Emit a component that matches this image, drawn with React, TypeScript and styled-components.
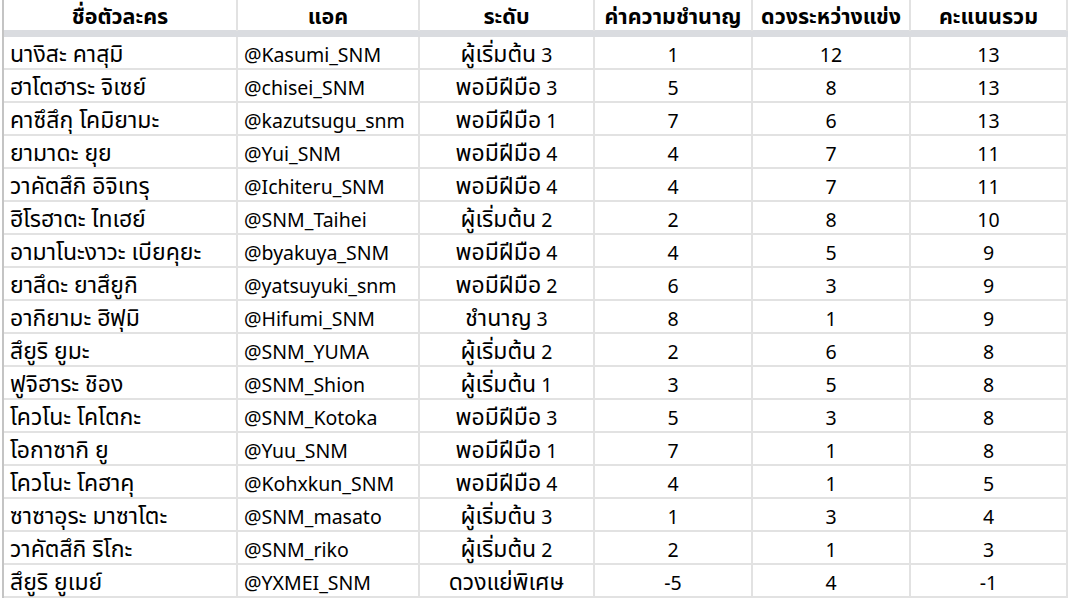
import React from 'react';
import styled, { createGlobalStyle } from 'styled-components';

const GlobalStyle = createGlobalStyle`
  html, body {
    margin: 0;
    padding: 0;
    background: #ffffff;
  }
  body {
    font-family: "Noto Sans", "Noto Sans Thai", "DejaVu Sans", sans-serif;
    color: #000000;
    overflow: hidden;
  }
`;

type Align = 'left' | 'center';

interface Column {
  title: string;
  width: number;
  align: Align;
}

const columns: Column[] = [
  { title: 'ชื่อตัวละคร', width: 234, align: 'left' },
  { title: 'แอค', width: 182, align: 'left' },
  { title: 'ระดับ', width: 175, align: 'center' },
  { title: 'ค่าความชำนาญ', width: 158, align: 'center' },
  { title: 'ดวงระหว่างแข่ง', width: 158, align: 'center' },
  { title: 'คะแนนรวม', width: 157, align: 'center' },
];

const rows: (string | number)[][] = [
  ['นางิสะ คาสุมิ', '@Kasumi_SNM', 'ผู้เริ่มต้น 3', 1, 12, 13],
  ['ฮาโตฮาระ จิเซย์', '@chisei_SNM', 'พอมีฝีมือ 3', 5, 8, 13],
  ['คาซึสึกุ โคมิยามะ', '@kazutsugu_snm', 'พอมีฝีมือ 1', 7, 6, 13],
  ['ยามาดะ ยุย', '@Yui_SNM', 'พอมีฝีมือ 4', 4, 7, 11],
  ['วาคัตสึกิ อิจิเทรุ', '@Ichiteru_SNM', 'พอมีฝีมือ 4', 4, 7, 11],
  ['ฮิโรฮาตะ ไทเฮย์', '@SNM_Taihei', 'ผู้เริ่มต้น 2', 2, 8, 10],
  ['อามาโนะงาวะ เบียคุยะ', '@byakuya_SNM', 'พอมีฝีมือ 4', 4, 5, 9],
  ['ยาสึดะ ยาสึยูกิ', '@yatsuyuki_snm', 'พอมีฝีมือ 2', 6, 3, 9],
  ['อากิยามะ ฮิฟุมิ', '@Hifumi_SNM', 'ชำนาญ 3', 8, 1, 9],
  ['สึยูริ ยูมะ', '@SNM_YUMA', 'ผู้เริ่มต้น 2', 2, 6, 8],
  ['ฟูจิฮาระ ชิอง', '@SNM_Shion', 'ผู้เริ่มต้น 1', 3, 5, 8],
  ['โควโนะ โคโตกะ', '@SNM_Kotoka', 'พอมีฝีมือ 3', 5, 3, 8],
  ['โอกาซากิ ยู', '@Yuu_SNM', 'พอมีฝีมือ 1', 7, 1, 8],
  ['โควโนะ โคฮาคุ', '@Kohxkun_SNM', 'พอมีฝีมือ 4', 4, 1, 5],
  ['ซาซาอุระ มาซาโตะ', '@SNM_masato', 'ผู้เริ่มต้น 3', 1, 3, 4],
  ['วาคัตสึกิ ริโกะ', '@SNM_riko', 'ผู้เริ่มต้น 2', 2, 1, 3],
  ['สึยูริ ยูเมย์', '@YXMEI_SNM', 'ดวงแย่พิเศษ', -5, 4, -1],
];

const gridTemplate = columns.map((c) => `${c.width}px`).join(' ');

const Sheet = styled.div`
  margin-left: 2px;
  border-left: 2px solid #c4c4c4;
  width: ${columns.reduce((s, c) => s + c.width, 0)}px;
`;

const HeaderRow = styled.div`
  display: grid;
  grid-template-columns: ${gridTemplate};
  height: 30px;
  border-bottom: 7px solid #dadce0;
`;

const Row = styled.div`
  display: grid;
  grid-template-columns: ${gridTemplate};
  height: 31px;
  border-bottom: 2px solid #e2e2e2;
`;

const Cell = styled.div<{ $align: Align }>`
  box-sizing: border-box;
  height: 100%;
  padding: 4px 6px 0;
  border-right: 2px solid #e2e2e2;
  text-align: ${({ $align }) => $align};
  font-size: 19.5px;
  line-height: 28px;
  white-space: nowrap;
`;

const HeaderCell = styled(Cell)`
  padding-top: 3px;
  line-height: 27px;
  font-weight: 700;
`;

// Thai runs render smaller than the Latin text in the fallback font, so give them their own size
const ThaiRun = styled.span<{ $header?: boolean }>`
  font-family: "Noto Sans Thai", "Noto Sans", sans-serif;
  font-size: ${({ $header }) => ($header ? '21.5px' : '23px')};
`;

const thaiPattern = /([\u0E00-\u0E7F]+(?:\s+[\u0E00-\u0E7F]+)*)/;

function Text({ value, header }: { value: string | number; header?: boolean }) {
  const parts = String(value).split(thaiPattern);
  return (
    <>
      {parts.map((part, i) =>
        i % 2 === 1 ? (
          <ThaiRun key={i} $header={header}>
            {part}
          </ThaiRun>
        ) : (
          part
        )
      )}
    </>
  );
}

export default function App() {
  return (
    <>
      <GlobalStyle />
      <Sheet>
        <HeaderRow>
          {columns.map((c) => (
            <HeaderCell key={c.title} $align="center">
              <Text value={c.title} header />
            </HeaderCell>
          ))}
        </HeaderRow>
        {rows.map((row, i) => (
          <Row key={i}>
            {row.map((value, j) => (
              <Cell key={j} $align={columns[j].align}>
                <Text value={value} />
              </Cell>
            ))}
          </Row>
        ))}
      </Sheet>
    </>
  );
}
